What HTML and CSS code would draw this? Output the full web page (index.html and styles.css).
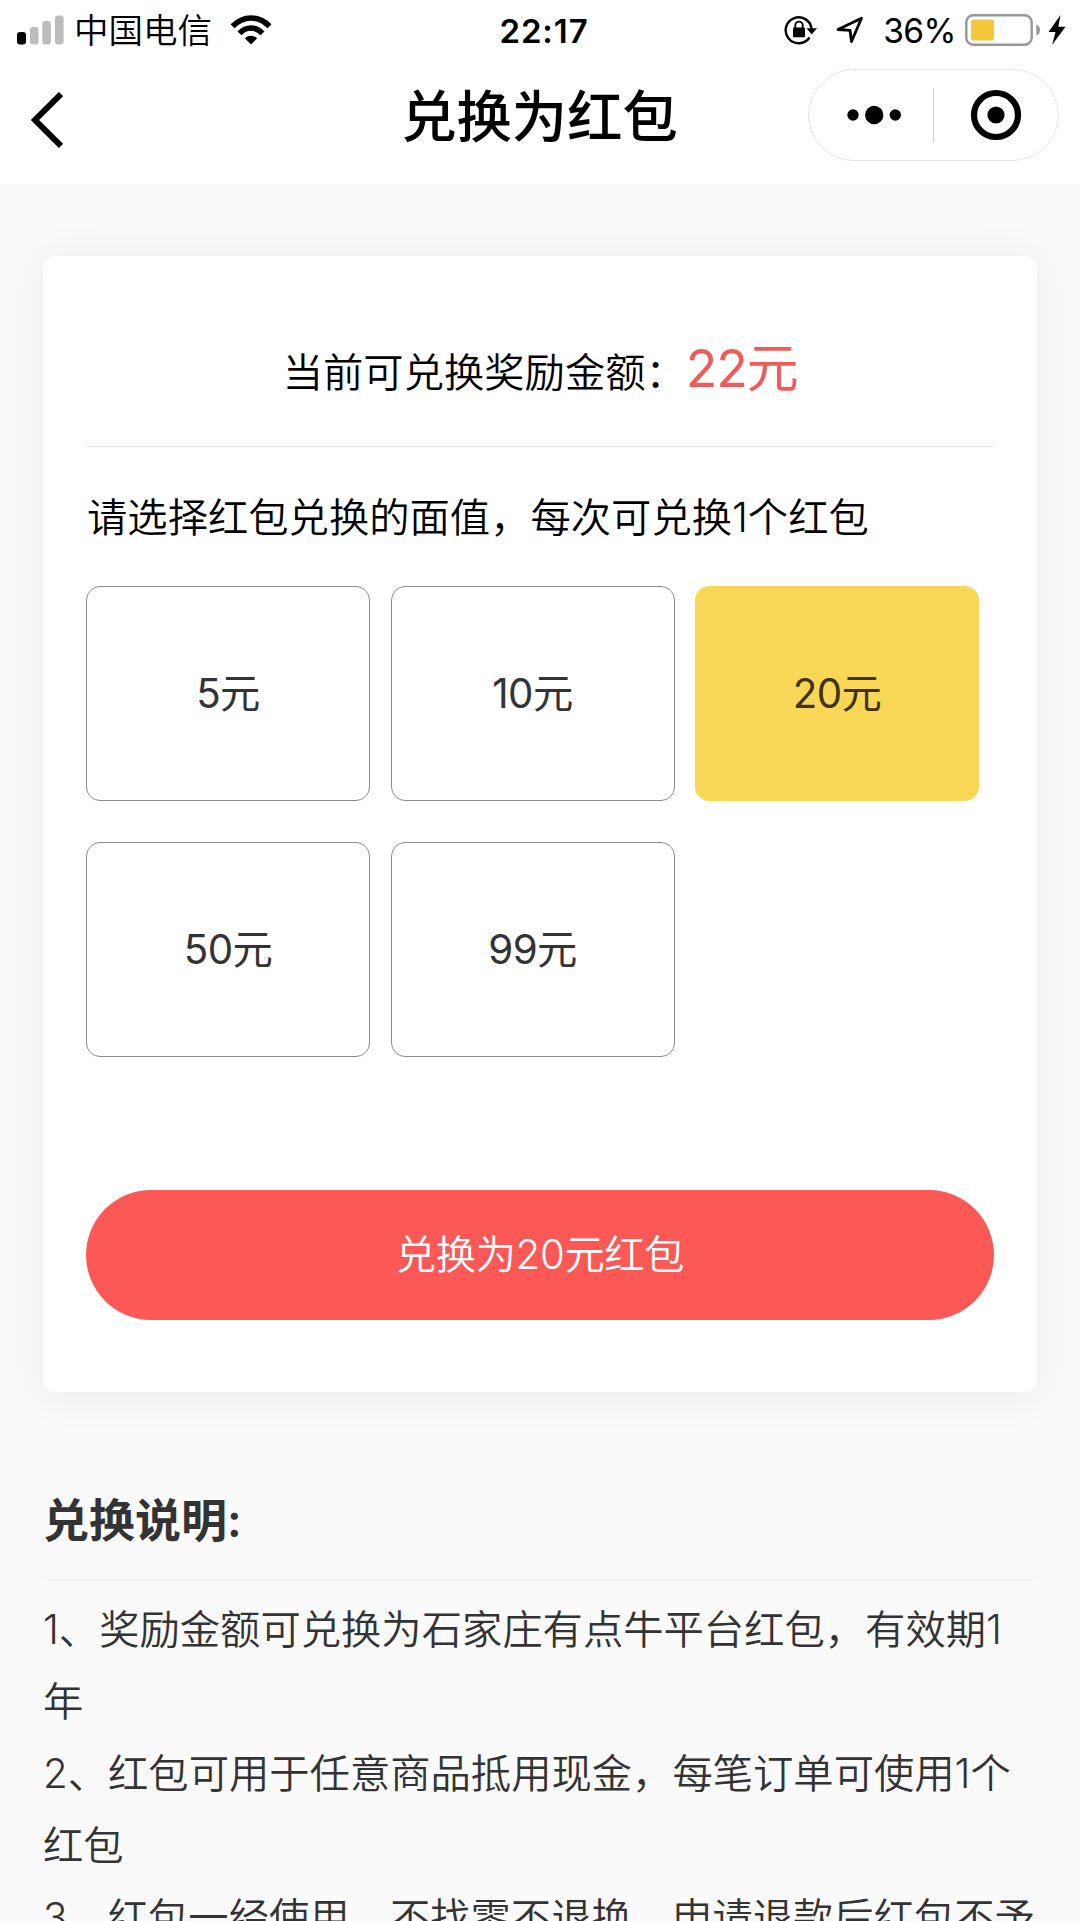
FILE: index.html
```html
<!DOCTYPE html>
<html lang="zh-CN">
<head>
<meta charset="utf-8">
<title>兑换为红包</title>
<link rel="stylesheet" href="styles.css">
</head>
<body>
<header class="header">
  <div class="status">
    <div class="status-left">
      <svg class="signal" width="47" height="30" viewBox="0 0 47 30">
        <rect x="0" y="17" width="9" height="12.5" rx="3"/>
        <g fill="#bcbcbc">
          <rect x="13" y="12" width="8.6" height="17.5" rx="3"/>
          <rect x="25.3" y="6" width="8.6" height="23.5" rx="3"/>
          <rect x="38" y="0.5" width="8.6" height="29" rx="3"/>
        </g>
      </svg>
      <span class="carrier">中国电信</span>
      <svg class="wifi" width="42" height="30" viewBox="0 0 42 30">
        <g fill="none" stroke="#000" stroke-width="5.6">
          <path d="M2.5 11.3Q11 3 21 3T39.500 11.3"/>
          <path d="M9.500 18.300Q14.500 13 21 13T32.500 18.300"/>
        </g>
        <path d="M14.800 23.200Q21 18.400 27.200 23.200L21 29.500Z"/>
      </svg>
    </div>
    <span class="time">22:17</span>
    <div class="status-right">
      <svg class="lock" width="34" height="30" viewBox="0 0 34 30">
        <path d="M25.500 22.500A13 13 0 1 1 27.600 14" fill="none" stroke="#000" stroke-width="2.400"/>
        <path d="M22.500 13.200H33L27.700 19.500Z"/>
        <rect x="9" y="12.500" width="12" height="9.800" rx="1"/>
        <path d="M11.300 13V10.300a3.700 3.700 0 0 1 7.400 0V13" fill="none" stroke="#000" stroke-width="1.900"/>
      </svg>
      <svg class="arrow" width="28" height="28" viewBox="0 0 28 28">
        <path d="M2 13.500L25.500 2.300L15.500 25.500L14 14.300Z" fill="none" stroke="#000" stroke-width="2.800" stroke-linejoin="round"/>
      </svg>
      <span class="percent">36%</span>
      <svg class="battery" width="76" height="32" viewBox="0 0 76 32">
        <rect x="1.300" y="1.300" width="65.400" height="29.400" rx="7" fill="#fff" stroke="#979797" stroke-width="2.400"/>
        <rect x="6" y="5.500" width="23" height="21" rx="2" fill="#f6c63b"/>
        <path d="M71.300 10.500Q75 12 75 16T71.300 21.500Z" fill="#979797"/>
      </svg>
      <svg class="bolt" width="18" height="30" viewBox="0 0 18 30">
        <path d="M12.500 0L0.500 17H7.500L4 30L17.500 11.800H10.300Z"/>
      </svg>
    </div>
  </div>
  <nav class="nav">
    <svg class="back" width="32" height="60" viewBox="0 0 32 60">
      <path d="M30 4L4 30L30 56" fill="none" stroke="#000" stroke-width="6"/>
    </svg>
    <h1 class="title">兑换为红包</h1>
    <div class="capsule">
      <svg width="54" height="20" viewBox="0 0 54 20">
        <circle cx="6" cy="10" r="5.700"/><circle cx="27.200" cy="10" r="9.200"/><circle cx="48.300" cy="10" r="5.700"/>
      </svg>
      <i class="capsule-line"></i>
      <svg width="52" height="52" viewBox="0 0 52 52">
        <circle cx="26" cy="26" r="22" fill="none" stroke="#000" stroke-width="6.200"/><circle cx="26" cy="26" r="8.600"/>
      </svg>
    </div>
  </nav>
</header>
<main class="page">
  <section class="card">
    <p class="balance">当前可兑换奖励金额：<strong class="money">22元</strong></p>
    <p class="prompt">请选择红包兑换的面值，每次可兑换1个红包</p>
    <div class="options">
      <div class="option">5元</div>
      <div class="option">10元</div>
      <div class="option selected">20元</div>
      <div class="option">50元</div>
      <div class="option">99元</div>
    </div>
    <div class="submit">兑换为20元红包</div>
  </section>
  <section class="notes">
    <h2 class="notes-title">兑换说明:</h2>
    <div class="notes-body">
      <p>1、奖励金额可兑换为石家庄有点牛平台红包，有效期1<br>年</p>
      <p>2、红包可用于任意商品抵用现金，每笔订单可使用1个<br>红包</p>
      <p>3、红包一经使用，不找零不退换，申请退款后红包不予</p>
    </div>
  </section>
</main>
</body>
</html>
```
FILE: styles.css
```css
* { box-sizing: border-box; margin: 0; padding: 0; }

body {
  width: 1080px;
  height: 1921px;
  overflow: hidden;
  background: #fafafa;
  color: #000;
  font-family: Inter, "Noto Sans CJK SC", sans-serif;
  font-size: 40.32px;
  font-weight: 350;
  line-height: 72px;
}

svg { display: block; flex: none; }

.header { height: 184px; background: #fff; }

.status {
  display: grid;
  grid-template-columns: 1fr auto 1fr;
  align-items: center;
  height: 58px;
  padding: 0 14px 0 17px;
  line-height: 58px;
}
.status-left, .status-right { display: flex; align-items: center; }
.status-right { justify-content: flex-end; }
.carrier { margin-left: 10px; padding-top: 2px; font-size: 34.500px; }
.wifi { margin-left: 18px; }
.time { margin-left: 5px; padding-top: 1px; font-size: 33px; font-weight: 600; letter-spacing: 0.900px; }
.arrow { margin-left: 18px; }
.percent { margin-left: 19px; padding-top: 1px; font-size: 33.500px; font-weight: 400; letter-spacing: -0.5px; }
.battery { margin-left: 9px; }
.bolt { margin-left: 7px; }

.nav {
  display: grid;
  grid-template-columns: 1fr auto 1fr;
  align-items: center;
  height: 114px;
  padding: 0 21px 0 31px;
}
.back { margin-top: 10px; }
.title { padding-top: 4px; font-size: 55.300px; font-weight: 500; margin-right: 11px; }
.capsule {
  display: flex;
  align-items: center;
  justify-self: end;
  width: 251px;
  height: 92px;
  padding-left: 38px;
  border: 1px solid #e6e6e6;
  border-radius: 46px;
}
.capsule-line { width: 1px; height: 54px; margin: 0 36px 0 32px; background: #d0d0d0; }

.page { padding: 72px 43px 0; }

.card {
  height: 1136px;
  padding: 0 43px;
  border-radius: 14px;
  background: #fff;
  box-shadow: 0 3px 44px rgba(0, 0, 0, 0.070);
}
.balance {
  height: 191px;
  padding-top: 81px;
  border-bottom: 1px solid #e8e8e8;
  text-align: center;
}
.money { font-size: 51.840px; font-weight: 400; letter-spacing: -1.2px; line-height: 1; color: #f05a58; }
.prompt { margin: 35px 0 32px 1px; white-space: nowrap; }

.options {
  display: grid;
  grid-template-columns: repeat(3, 284px);
  grid-auto-rows: 215px;
  gap: 41px 20.500px;
}
.option {
  display: flex;
  align-items: center;
  justify-content: center;
  border: 1px solid #8c8c8c;
  border-radius: 14px;
  color: #333;
  font-weight: 400;
  letter-spacing: -0.6px;
}
.option.selected { border-color: #f9d756; background: #f9d756; color: #40331a; }

.submit {
  margin-top: 133px;
  height: 130px;
  border-radius: 65px;
  background: #fc5855;
  color: #fff;
  line-height: 130px;
  letter-spacing: -0.4px;
  text-align: center;
}

.notes { color: #333; }
.notes-title {
  margin-top: 92px;
  padding-bottom: 23px;
  border-bottom: 1px solid #ebebeb;
  font-size: 46px;
  font-weight: 600;
  line-height: 72px;
}
.notes-body { padding-top: 14px; white-space: nowrap; }
```
